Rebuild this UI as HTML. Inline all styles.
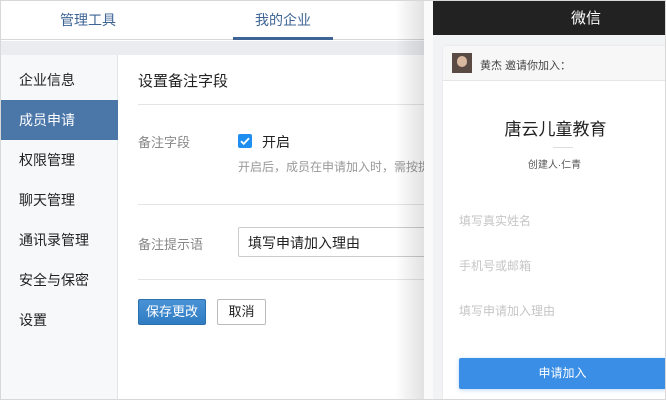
<!DOCTYPE html>
<html><head><meta charset="utf-8"><style>
*{margin:0;padding:0;box-sizing:border-box}
body{width:666px;height:400px;overflow:hidden;background:#fff;font-family:"Liberation Sans","Noto Sans CJK SC",sans-serif;position:relative}
.abs{position:absolute}
.frame{position:absolute;left:0;top:0;width:666px;height:400px;border:1px solid #d8d8d8;pointer-events:none}
</style></head><body>
<!-- left app -->
<div class="abs" style="left:0;top:0;width:440px;height:40px;background:#fff;border-bottom:1px solid #d5d7db"></div>
<div class="abs" style="left:60px;top:10px;font-size:14px;color:#3d6495">管理工具</div>
<div class="abs" style="left:255px;top:10px;font-size:14px;color:#3d6495">我的企业</div>
<div class="abs" style="left:233px;top:37px;width:100px;height:3px;background:#3d6495"></div>
<div class="abs" style="left:0;top:41px;width:440px;height:14px;background:#ebecef"></div>
<div class="abs" style="left:0;top:55px;width:118px;height:345px;background:#f7f8fa;border-right:1px solid #e3e4e8"></div>
<div class="abs" style="left:0;top:100px;width:118px;height:40px;background:#4a76a8"></div>
<div class="abs" style="left:19px;top:70px;font-size:14px;line-height:20px;color:#222">
<div style="height:40px">企业信息</div>
<div style="height:40px;color:#fff">成员申请</div>
<div style="height:40px">权限管理</div>
<div style="height:40px">聊天管理</div>
<div style="height:40px">通讯录管理</div>
<div style="height:40px">安全与保密</div>
<div style="height:40px">设置</div>
</div>
<div class="abs" style="left:138px;top:70px;font-size:15px;color:#222">设置备注字段</div>
<div class="abs" style="left:138px;top:104px;width:300px;height:1px;background:#e3e4e8"></div>
<div class="abs" style="left:138px;top:132px;font-size:13px;color:#888">备注字段</div>
<div class="abs" style="left:238px;top:134px;width:14px;height:14px;background:#1e8ef0;border-radius:2px"><svg width="14" height="14" viewBox="0 0 14 14"><path d="M3 7.2l2.7 2.6L11 4.3" stroke="#fff" stroke-width="1.8" fill="none"/></svg></div>
<div class="abs" style="left:262px;top:132px;font-size:14px;color:#222">开启</div>
<div class="abs" style="left:238px;top:158px;font-size:12px;color:#999;white-space:nowrap">开启后，成员在申请加入时，需按提示填写</div>
<div class="abs" style="left:138px;top:204px;width:300px;height:1px;background:#e3e4e8"></div>
<div class="abs" style="left:138px;top:234px;font-size:13px;color:#888">备注提示语</div>
<div class="abs" style="left:238px;top:227px;width:220px;height:30px;border:1px solid #ccc;border-radius:2px"></div>
<div class="abs" style="left:248px;top:233px;font-size:14px;color:#222">填写申请加入理由</div>
<div class="abs" style="left:138px;top:279px;width:300px;height:1px;background:#e3e4e8"></div>
<div class="abs" style="left:138px;top:299px;width:68px;height:26px;background:linear-gradient(#4a92d6,#2f7cc2);border:1px solid #2a6fb0;border-radius:2px;color:#fff;font-size:13px;text-align:center;line-height:24px">保存更改</div>
<div class="abs" style="left:217px;top:299px;width:49px;height:26px;background:#fff;border:1px solid #bbb;border-radius:2px;color:#222;font-size:13px;text-align:center;line-height:24px">取消</div>
<!-- shadow -->
<div class="abs" style="left:395px;top:0;width:30px;height:400px;background:linear-gradient(90deg,rgba(0,0,0,0),rgba(0,0,0,0.12))"></div>
<div class="abs" style="left:424px;top:0;width:9px;height:400px;background:#fafafa"></div>
<!-- phone -->
<div class="abs" style="left:433px;top:0;width:233px;height:400px;background:#f2f3f5"></div>
<div class="abs" style="left:433px;top:0;width:233px;height:35px;background:#222"></div>
<div class="abs" style="left:571px;top:7px;font-size:15px;color:#fff">微信</div>
<div class="abs" style="left:443px;top:46px;width:223px;height:354px;background:#fff;border-radius:3px 0 0 0;box-shadow:0 0 2px rgba(0,0,0,0.08)"></div>
<div class="abs" style="left:443px;top:46px;width:223px;height:35px;background:#f7f7f8;border-bottom:1px solid #e6e6e6;border-radius:3px 0 0 0"></div>
<div class="abs" style="left:452px;top:53px;width:20px;height:20px;background:#5a4a44;overflow:hidden"><div style="margin:3px 0 0 5px;width:10px;height:11px;border-radius:5px;background:#d9b8a0"></div></div>
<div class="abs" style="left:480px;top:57px;font-size:11px;color:#444">黄杰 邀请你加入：</div>
<div class="abs" style="left:443px;top:115px;width:223px;text-align:center;font-size:17px;color:#222;padding-left:2px">唐云儿童教育</div>
<div class="abs" style="left:553px;top:147px;width:20px;height:1px;background:#ddd"></div>
<div class="abs" style="left:443px;top:156px;width:223px;text-align:center;font-size:10px;color:#555">创建人·仁青</div>
<div class="abs" style="left:459px;top:212px;font-size:12px;color:#c6c6c6">填写真实姓名</div>
<div class="abs" style="left:459px;top:257px;font-size:12px;color:#c6c6c6">手机号或邮箱</div>
<div class="abs" style="left:459px;top:302px;font-size:12px;color:#c6c6c6">填写申请加入理由</div>
<div class="abs" style="left:459px;top:358px;width:207px;height:31px;background:#3a8ee6;border-radius:2px 0 0 2px;box-shadow:0 1px 4px rgba(58,142,230,0.35);color:#fff;font-size:12px;text-align:center;line-height:31px;padding-left:0">申请加入</div>
<div class="frame"></div>
</body></html>
